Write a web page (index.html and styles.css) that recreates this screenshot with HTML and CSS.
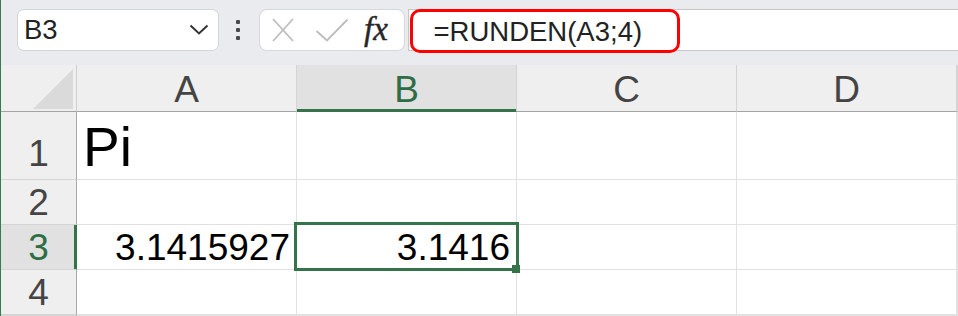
FILE: index.html
```html
<!DOCTYPE html>
<html lang="de">
<head>
<meta charset="utf-8">
<title>RUNDEN</title>
<link rel="stylesheet" href="styles.css">
</head>
<body>
<div class="app">
  <div class="toolbar">
    <div class="namebox">
      <span class="ref">B3</span>
      <svg class="chev" width="20" height="12" viewBox="0 0 20 12"><polyline points="1.5,1.5 10,9.5 18.5,1.5" fill="none" stroke="#333" stroke-width="2"/></svg>
    </div>
    <div class="more"><i></i><i></i><i></i></div>
    <div class="fxbox">
      <svg class="xic" width="22" height="24" viewBox="0 0 22 24"><path d="M1 1 L21 23 M21 1 L1 23" stroke="#bdbdbd" stroke-width="1.8" fill="none"/></svg>
      <svg class="ok" width="34" height="24" viewBox="0 0 34 24"><polyline points="1.5,13 12,22.5 32.5,1.5" fill="none" stroke="#bdbdbd" stroke-width="1.8"/></svg>
      <span class="fx">fx</span>
    </div>
    <div class="formula">
      <span class="mark"></span>
      <span class="ftext">=RUNDEN(A3;4)</span>
    </div>
  </div>
  <div class="sheet">
    <div class="corner"><svg width="40" height="40" viewBox="0 0 40 40"><polygon points="0,40 40,40 40,0" fill="#dadada"/></svg></div>
    <div class="ch">A</div>
    <div class="ch sel">B</div>
    <div class="ch">C</div>
    <div class="ch">D</div>
    <div class="ch"></div>

    <div class="rh r1">1</div>
    <div class="c pi">Pi</div>
    <div class="c"></div>
    <div class="c"></div>
    <div class="c"></div>
    <div class="c"></div>

    <div class="rh">2</div>
    <div class="c"></div>
    <div class="c"></div>
    <div class="c"></div>
    <div class="c"></div>
    <div class="c"></div>

    <div class="rh sel">3</div>
    <div class="c num">3.1415927</div>
    <div class="c num active">3.1416</div>
    <div class="c"></div>
    <div class="c"></div>
    <div class="c"></div>

    <div class="rh">4</div>
    <div class="c"></div>
    <div class="c"></div>
    <div class="c"></div>
    <div class="c"></div>
    <div class="c"></div>

    <div class="rh"></div>
    <div class="c"></div>
    <div class="c"></div>
    <div class="c"></div>
    <div class="c"></div>
    <div class="c"></div>
  </div>
</div>
</body>
</html>
```

FILE: styles.css
```css
* { box-sizing: border-box; margin: 0; padding: 0; }
html, body { width: 958px; height: 316px; overflow: hidden; background: #fff; }
body { font-family: "Liberation Sans", Arial, sans-serif; }

.app { height: 316px; border-left: 1px solid #3b7a4c; overflow: hidden; }

.toolbar {
  height: 65px;
  background: #e9ebef;
  display: flex;
  align-items: flex-start;
  padding: 9px 0 0 16px;
}

.namebox {
  width: 202px;
  height: 42px;
  background: #fff;
  border: 1px solid #d3d5d8;
  border-radius: 7px;
  display: flex;
  align-items: center;
  padding-left: 6px;
}
.ref { font-size: 27.5px; line-height: 40px; color: #222; }
.chev { margin-left: auto; margin-right: 9px; }

.more {
  margin: 11px 0 0 17px;
  display: flex;
  flex-direction: column;
  gap: 4px;
}
.more i { display: block; width: 4px; height: 4px; background: #4a4a4a; border-radius: 1px; }

.fxbox {
  margin-left: 19px;
  width: 146px;
  height: 42px;
  background: #fff;
  border: 1px solid #d6d8db;
  border-radius: 8px;
  display: flex;
  align-items: center;
}
.xic { margin-left: 12px; }
.ok { margin-left: 21px; margin-bottom: 1px; }
.fx {
  margin-left: 15px;
  font-family: "Liberation Serif", "Times New Roman", serif;
  font-style: italic;
  font-size: 33px;
  color: #262626;
  align-self: stretch;
  line-height: 38px;
  -webkit-text-stroke: 0.4px #262626;
}

.formula {
  position: relative;
  flex: 1;
  margin-left: 3px;
  height: 42px;
  background: #fff;
  border-top: 1px solid #c8c8c8;
  border-bottom: 1px solid #c8c8c8;
  border-left: 1px solid #c8c8c8;
  padding: 4px 0 0 24.5px;
}
.ftext { font-size: 27.5px; line-height: 36px; color: #222; white-space: nowrap; }
.mark {
  position: absolute;
  left: 1px;
  top: -1px;
  width: 270px;
  height: 44px;
  border: 3px solid #ff0000;
  border-radius: 10px;
}

.sheet {
  display: grid;
  grid-template-columns: 76px repeat(4, 220px) 1fr;
  grid-template-rows: 47px 68px 45px 45px 45px 1fr;
  height: 251px;
}

.corner {
  background: #efefef;
  border-right: 1px solid #cfcfcf;
  border-bottom: 1px solid #a4a4a4;
  display: flex;
  justify-content: flex-end;
  align-items: flex-end;
  padding: 0 3px 2px 0;
}
.corner svg { display: block; }

.ch {
  background: #efefef;
  border-right: 1px solid #d4d4d4;
  border-bottom: 1px solid #a4a4a4;
  color: #444;
  font-size: 37px;
  display: flex;
  justify-content: center;
  align-items: flex-end;
}
.ch.sel {
  background: #e1e1e1;
  color: #2f6e45;
  border-bottom-color: #35744a;
  box-shadow: inset 0 -2px 0 #35744a;
}

.rh {
  background: #efefef;
  border-right: 1px solid #a8a8a8;
  border-bottom: 1px solid #d4d4d4;
  color: #444;
  font-size: 37px;
  display: flex;
  justify-content: center;
  align-items: flex-end;
}
.rh.r1 { padding-bottom: 4px; }
.rh.sel {
  background: #e1e1e1;
  color: #2f6e45;
  border-right-color: #35744a;
  box-shadow: inset -2px 0 0 #35744a;
}

.c {
  border-right: 1px solid #e1e1e1;
  border-bottom: 1px solid #e1e1e1;
  font-size: 37px;
  color: #000;
  display: flex;
  align-items: flex-end;
  white-space: nowrap;
}
.c.pi { font-size: 55px; padding-left: 6px; }
.c.num { justify-content: flex-end; padding-right: 6px; }

.active { position: relative; }
.active::before {
  content: "";
  position: absolute;
  left: -3px;
  top: -3px;
  right: -3px;
  bottom: -2px;
  border: 3px solid #35744a;
  z-index: 2;
}
.active::after {
  content: "";
  position: absolute;
  right: -4px;
  bottom: -4px;
  width: 8px;
  height: 8px;
  background: #35744a;
  z-index: 3;
}
```
